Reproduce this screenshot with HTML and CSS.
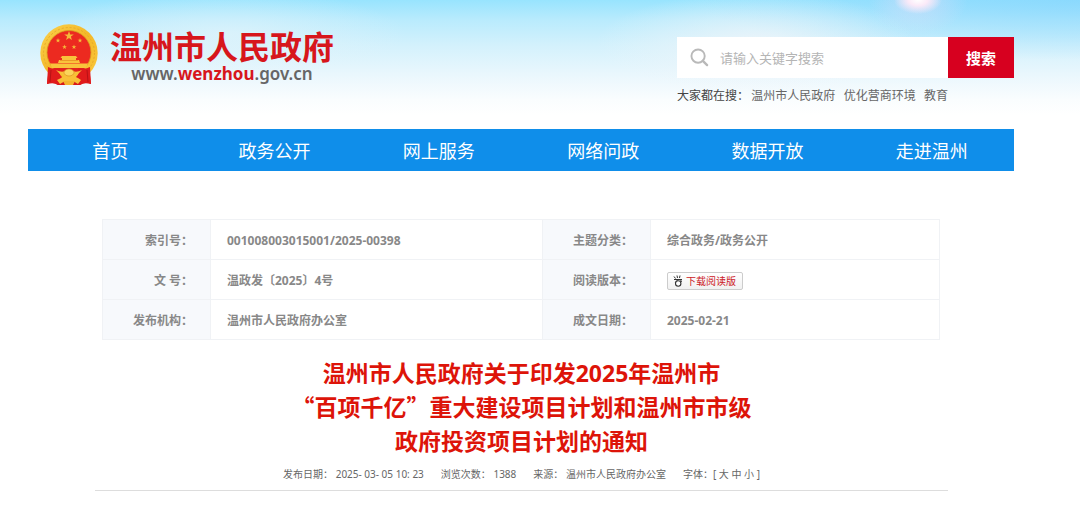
FILE: index.html
```html
<!DOCTYPE html>
<html lang="zh-CN">
<head>
<meta charset="utf-8">
<meta name="viewport" content="width=device-width, initial-scale=1">
<title>温州市人民政府</title>
<link rel="stylesheet" href="styles.css">
</head>
<body>
<div class="page">
  <header class="header">
    <a class="brand" href="#">
      <svg class="emblem" viewBox="0 0 58 61" aria-hidden="true">
        <defs>
          <linearGradient id="gold" x1="0" y1="0" x2="1" y2="1">
            <stop offset="0" stop-color="#fbd24c"/><stop offset=".5" stop-color="#f3b829"/><stop offset="1" stop-color="#fcc93c"/>
          </linearGradient>
          <polygon id="star" points="0,-5 1.2,-1.6 4.8,-1.5 1.9,.6 2.9,4 0,2 -2.9,4 -1.9,.6 -4.8,-1.5 -1.2,-1.6"/>
        </defs>
        <path d="M9 43 L49 43 L51 60 Q44 58 40 61 L18 61 Q14 58 7 60 Z" fill="#d8181a"/>
        <circle cx="29" cy="29" r="28.7" fill="url(#gold)"/>
        <circle cx="29" cy="29" r="25.5" fill="none" stroke="#e8ab28" stroke-width="1" stroke-dasharray="2 2"/>
        <circle cx="29" cy="28.5" r="22" fill="#ec2a20" stroke="#d99a20" stroke-width=".8"/>
        <g fill="#f5b93a">
          <use href="#star" x="29" y="12"/>
          <use href="#star" transform="translate(18 16.500) scale(.5)"/>
          <use href="#star" transform="translate(40 16.500) scale(.5)"/>
          <use href="#star" transform="translate(24.5 23) scale(.5)"/>
          <use href="#star" transform="translate(34 23) scale(.5)"/>
        </g>
        <path d="M22 32 h14 l1.500 2 h-1.500 v2 h3 l1 3 H18 l1 -3 h3 v-2 h-1.500 Z M10 39.500 h38 l-2 4.500 H12 Z" fill="#f9c33b"/>
        <path d="M20 36.500 h18" stroke="#e58a20" stroke-width=".7"/>
        <path d="M13 44 h32 l-5 5 H18 Z" fill="#e2231c"/>
        <path d="M8 43 Q13 46 20 44 Q18 50 22 53 L18 61 Q13 57 7 60 Z M50 43 Q45 46 38 44 Q40 50 36 53 L40 61 Q45 57 51 60 Z" fill="#e01b1c"/>
        <path d="M11 46 L10 58 M47 46 L48 58" stroke="#b81216" stroke-width="1"/>
        <path d="M16 46 Q23 50 29 45 Q35 50 42 46 L38 50 L33 52 L38 54 L41 56 L38 60 L33 57 H25 L20 60 L17 56 L25 52 L20 50 Z" fill="#f8c038"/>
        <ellipse cx="29" cy="48.500" rx="5" ry="3.500" fill="#fbd45a" stroke="#dd8f20" stroke-width=".7"/>
        <path d="M23 57 h12 l-2 4 h-8 Z" fill="#f4b42e"/>
      </svg>
      <span class="brand-text">
        <span class="brand-name">温州市人民政府</span>
        <span class="brand-url">www.<b>wenzhou</b>.gov.cn</span>
      </span>
    </a>
    <div class="search">
      <form class="search-form">
        <label class="search-label" for="q">
          <svg class="search-icon" viewBox="0 0 20 20" aria-label="搜索关键字"><circle cx="8.500" cy="8.500" r="7" fill="none" stroke="#b9b9b9" stroke-width="2"/><path d="M13.500 13.500 L18 18" stroke="#b9b9b9" stroke-width="2.500" stroke-linecap="round"/></svg>
        </label>
        <input class="search-input" id="q" type="text" placeholder="请输入关键字搜索">
        <button class="search-button" type="button">搜索</button>
      </form>
      <div class="hot">
        <span class="hot-title">大家都在搜：</span>
        <a href="#">温州市人民政府</a>
        <a href="#">优化营商环境</a>
        <a href="#">教育</a>
      </div>
    </div>
  </header>

  <nav class="nav">
    <a href="#">首页</a>
    <a href="#">政务公开</a>
    <a href="#">网上服务</a>
    <a href="#">网络问政</a>
    <a href="#">数据开放</a>
    <a href="#">走进温州</a>
  </nav>

  <main class="article">
    <table class="info">
      <tbody>
        <tr><th scope="row">索引号：</th><td>001008003015001/2025-00398</td><th scope="row">主题分类：</th><td>综合政务/政务公开</td></tr>
        <tr><th scope="row">文 号：</th><td>温政发〔2025〕4号</td><th scope="row">阅读版本：</th><td>
          <button class="download" type="button">
            <svg class="download-icon" viewBox="0 0 10 12" aria-hidden="true"><path d="M1 1.500 L2.500 3.500 M4 .5 L4.500 3 M7 .5 L6.500 3 M1 4.500 H9 M5 4.500 L2 8 M7.500 4.500 L8.500 7" fill="none" stroke="#333" stroke-width="1"/><circle cx="5.200" cy="8.500" r="2.700" fill="#fff" stroke="#333" stroke-width="1.100"/></svg>
            <span>下载阅读版</span>
          </button></td></tr>
        <tr><th scope="row">发布机构：</th><td>温州市人民政府办公室</td><th scope="row">成文日期：</th><td>2025-02-21</td></tr>
      </tbody>
    </table>
    <h1 class="title">温州市人民政府关于印发2025年温州市<br><span class="quote">“</span>百项千亿<span class="quote">”</span>重大建设项目计划和温州市市级<br>政府投资项目计划的通知</h1>
    <div class="meta">
      <span>发布日期： 2025- 03- 05 10: 23</span>
      <span>浏览次数： 1388</span>
      <span>来源： 温州市人民政府办公室</span>
      <span>字体：[ <a href="#">大</a> <a href="#">中</a> <a href="#">小</a> ]</span>
    </div>
  </main>
</div>
</body>
</html>
```
FILE: styles.css
```css
* { box-sizing: border-box; }

body {
  margin: 0;
  background: #fff;
  color: #666;
  font-family: "Noto Sans", "Noto Sans CJK SC", sans-serif;
  font-size: 12px;
}

a { color: inherit; text-decoration: none; }

button, input { font-family: inherit; }

.page {
  padding: 0 66px 24px 28px;
  background:
    radial-gradient(ellipse 24px 14px at 85% 0, #fff 0, #fbeaf8 40%, #fbe0f400 100%) no-repeat,
    radial-gradient(ellipse 50px 34px at 85% 0, #f0dcf677 0, #f0dcf600 100%) no-repeat,
    radial-gradient(ellipse 160px 50px at 70% 42px, #f1f5f9cc 0, #f1f5f900 100%) no-repeat,
    radial-gradient(ellipse 180px 44px at 21% 34px, #e3f4fbaa 0, #e3f4fb00 100%) no-repeat,
    radial-gradient(ellipse 380px 60px at 100% 0, #84d4fdaa 0, #84d4fd00 100%) no-repeat,
    linear-gradient(#98e4fe 0, #b9ebfd 20px, #d3f1fc 45px, #eaf7fd 75px, #fafdfe 100px, #fff 115px) no-repeat;
}

.header {
  display: flex;
  justify-content: space-between;
  align-items: flex-start;
  min-height: 129px;
}

.brand {
  display: flex;
  gap: 12px;
  padding: 24px 0 0 12px;
}

.emblem { width: 58px; height: 61px; }

.brand-text {
  display: flex;
  flex-direction: column;
  align-items: center;
}

.brand-name {
  color: #d7161c;
  font-family: "Noto Sans CJK SC", sans-serif;
  font-size: 32px;
  font-weight: 700;
  line-height: 42px;
}

.brand-url {
  color: #666;
  font-size: 17px;
  font-weight: 600;
  line-height: 16px;
}

.brand-url b { color: #d7161c; font-weight: 700; }

.search {
  flex: 0 1 337px;
  padding-top: 37px;
}

.search-form {
  display: flex;
  height: 41px;
  background: #fff;
}

.search-label {
  display: flex;
  align-items: center;
  padding: 0 11px 0 13px;
}

.search-icon { width: 19px; height: 19px; }

.search-input {
  flex: 1;
  min-width: 0;
  padding: 0;
  border: 0;
  outline: 0;
  background: none;
  color: #666;
  font-size: 13px;
}

.search-input::placeholder { color: #b5b5b5; opacity: 1; }

.search-button {
  width: 66px;
  padding: 0;
  border: 0;
  background: #d7001f;
  color: #fff;
  font-size: 15px;
  font-weight: 700;
}

.hot {
  display: flex;
  justify-content: space-between;
  padding-right: 66px;
  line-height: 20px;
  margin-top: 8px;
  white-space: nowrap;
}

.hot-title {
  width: 66px;
  color: #444;
}

.nav {
  display: grid;
  grid-template-columns: repeat(6, 1fr);
  padding-top: 2px;
  background: #0f8eea;
  color: #fff;
  font-size: 18px;
  line-height: 40px;
  text-align: center;
}

.article { padding: 48px 66px 0 67px; }

.info {
  width: calc(100% - 15px);
  margin: 0 7px;
  border-collapse: collapse;
  table-layout: fixed;
  color: #888;
  font-weight: 700;
}

.info th,
.info td {
  height: 40px;
  padding: 2px 0 0;
  border: 1px solid #f0f2f5;
  line-height: 20px;
}

.info th {
  width: 108px;
  padding-right: 17px;
  background: #f7f9fc;
  text-align: right;
}

.info td { padding-left: 16px; }

.info td:nth-child(2) { width: 332px; }

.download {
  display: flex;
  align-items: center;
  gap: 3px;
  height: 18px;
  padding: 0 6px 0 5px;
  border: 1px solid #ccc;
  border-radius: 2px;
  background: linear-gradient(#fff, #f1f1f1);
  color: #cc2027;
  font-size: 10px;
  line-height: 16px;
}

.download-icon { width: 10px; height: 12px; }

.title {
  margin: 0;
  padding-top: 16px;
  color: #dd1409;
  font-size: 23px;
  font-weight: 700;
  line-height: 34px;
  text-align: center;
}

.quote {
  font-family: "Noto Sans CJK SC", sans-serif;
  line-height: 20px;
}

.meta {
  display: flex;
  justify-content: center;
  gap: 17px;
  padding: 6px 0;
  border-bottom: 1px solid #ddd;
  font-size: 10px;
  line-height: 20px;
}
```
